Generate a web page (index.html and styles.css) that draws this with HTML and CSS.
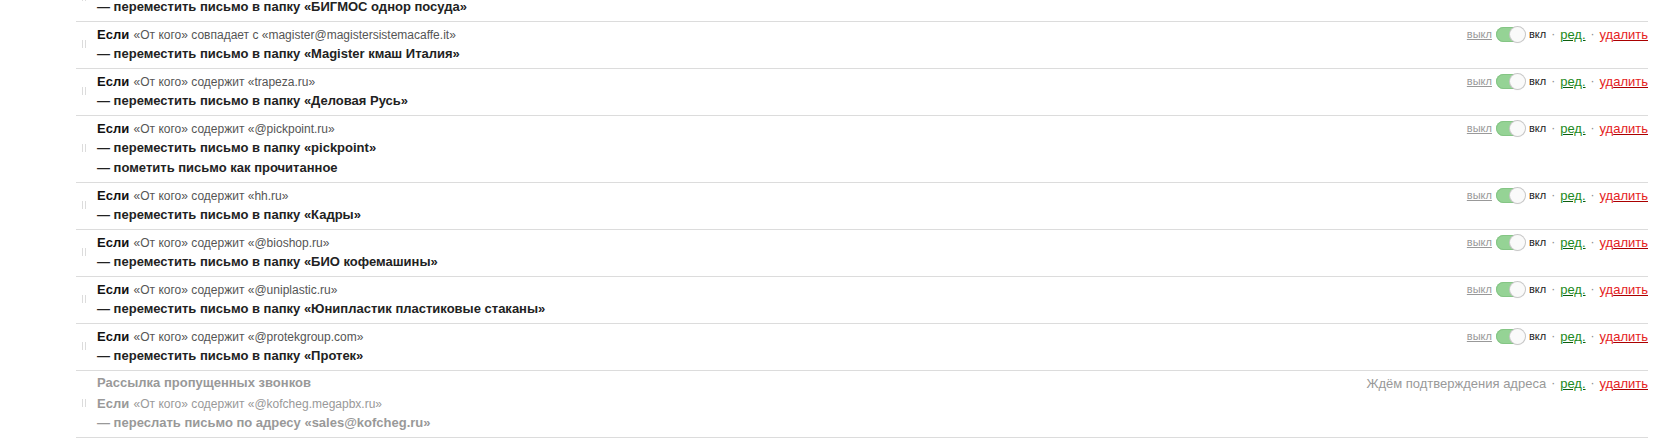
FILE: index.html
```html
<!DOCTYPE html>
<html lang="ru">
<head>
<meta charset="utf-8">
<link rel="stylesheet" href="styles.css">
</head>
<body>
<div class="list">
  <div class="rule">
    <div class="handle"></div>
    <div class="body">
      <div class="line"><b class="if">Если</b> <span class="cond">«От кого» содержит «bigmos.ru»</span></div>
      <div class="line act">— переместить письмо в папку «БИГМОС однор посуда»</div>
    </div>
    <div class="ctrl">
      <a class="off">выкл</a><span class="toggle"><span class="knob"></span></span><span class="on">вкл</span><span class="dot">·</span><a class="edit">ред.</a><span class="dot">·</span><a class="del">уд<u>алить</u></a>
    </div>
  </div>
  <div class="rule">
    <div class="handle"></div>
    <div class="body">
      <div class="line"><b class="if">Если</b> <span class="cond">«От кого» совпадает с «magister@magistersistemacaffe.it»</span></div>
      <div class="line act">— переместить письмо в папку «Magister кмаш Италия»</div>
    </div>
    <div class="ctrl">
      <a class="off">выкл</a><span class="toggle"><span class="knob"></span></span><span class="on">вкл</span><span class="dot">·</span><a class="edit">ред.</a><span class="dot">·</span><a class="del">уд<u>алить</u></a>
    </div>
  </div>
  <div class="rule">
    <div class="handle"></div>
    <div class="body">
      <div class="line"><b class="if">Если</b> <span class="cond">«От кого» содержит «trapeza.ru»</span></div>
      <div class="line act">— переместить письмо в папку «Деловая Русь»</div>
    </div>
    <div class="ctrl">
      <a class="off">выкл</a><span class="toggle"><span class="knob"></span></span><span class="on">вкл</span><span class="dot">·</span><a class="edit">ред.</a><span class="dot">·</span><a class="del">уд<u>алить</u></a>
    </div>
  </div>
  <div class="rule">
    <div class="handle"></div>
    <div class="body">
      <div class="line"><b class="if">Если</b> <span class="cond">«От кого» содержит «@pickpoint.ru»</span></div>
      <div class="line act">— переместить письмо в папку «pickpoint»</div>
      <div class="line act">— пометить письмо как прочитанное</div>
    </div>
    <div class="ctrl">
      <a class="off">выкл</a><span class="toggle"><span class="knob"></span></span><span class="on">вкл</span><span class="dot">·</span><a class="edit">ред.</a><span class="dot">·</span><a class="del">уд<u>алить</u></a>
    </div>
  </div>
  <div class="rule">
    <div class="handle"></div>
    <div class="body">
      <div class="line"><b class="if">Если</b> <span class="cond">«От кого» содержит «hh.ru»</span></div>
      <div class="line act">— переместить письмо в папку «Кадры»</div>
    </div>
    <div class="ctrl">
      <a class="off">выкл</a><span class="toggle"><span class="knob"></span></span><span class="on">вкл</span><span class="dot">·</span><a class="edit">ред.</a><span class="dot">·</span><a class="del">уд<u>алить</u></a>
    </div>
  </div>
  <div class="rule">
    <div class="handle"></div>
    <div class="body">
      <div class="line"><b class="if">Если</b> <span class="cond">«От кого» содержит «@bioshop.ru»</span></div>
      <div class="line act">— переместить письмо в папку «БИО кофемашины»</div>
    </div>
    <div class="ctrl">
      <a class="off">выкл</a><span class="toggle"><span class="knob"></span></span><span class="on">вкл</span><span class="dot">·</span><a class="edit">ред.</a><span class="dot">·</span><a class="del">уд<u>алить</u></a>
    </div>
  </div>
  <div class="rule">
    <div class="handle"></div>
    <div class="body">
      <div class="line"><b class="if">Если</b> <span class="cond">«От кого» содержит «@uniplastic.ru»</span></div>
      <div class="line act">— переместить письмо в папку «Юнипластик пластиковые стаканы»</div>
    </div>
    <div class="ctrl">
      <a class="off">выкл</a><span class="toggle"><span class="knob"></span></span><span class="on">вкл</span><span class="dot">·</span><a class="edit">ред.</a><span class="dot">·</span><a class="del">уд<u>алить</u></a>
    </div>
  </div>
  <div class="rule">
    <div class="handle"></div>
    <div class="body">
      <div class="line"><b class="if">Если</b> <span class="cond">«От кого» содержит «@protekgroup.com»</span></div>
      <div class="line act">— переместить письмо в папку «Протек»</div>
    </div>
    <div class="ctrl">
      <a class="off">выкл</a><span class="toggle"><span class="knob"></span></span><span class="on">вкл</span><span class="dot">·</span><a class="edit">ред.</a><span class="dot">·</span><a class="del">уд<u>алить</u></a>
    </div>
  </div>
  <div class="rule pending">
    <div class="handle"></div>
    <div class="body">
      <div class="line title">Рассылка пропущенных звонков</div>
      <div class="line"><b class="if">Если</b> <span class="cond">«От кого» содержит «@kofcheg.megapbx.ru»</span></div>
      <div class="line act">— переслать письмо по адресу «sales@kofcheg.ru»</div>
    </div>
    <div class="ctrl">
      <span class="wait">Ждём подтверждения адреса</span><span class="dot">·</span><a class="edit">ред.</a><span class="dot">·</span><a class="del">уд<u>алить</u></a>
    </div>
  </div>
</div>
</body>
</html>
```

FILE: styles.css
```css
html, body {
  margin: 0;
  padding: 0;
  background: #fff;
  font-family: "Liberation Sans", Arial, sans-serif;
  color: #000;
}

.list {
  margin: -25px 0 0 76px;
  width: 1572px;
}

.rule {
  display: flex;
  align-items: flex-start;
  padding: 2px 0 4px 0;
  border-bottom: 1px solid #dcdcdc;
}

.handle {
  align-self: center;
  flex: none;
  width: 6px;
  height: 8px;
  margin: 0 10px 0 5px;
  background-image:
    radial-gradient(circle, #d8d8d8 0.6px, transparent 0.7px);
  background-size: 3px 2px;
  background-position: 0 0;
  opacity: 0.9;
}

.body {
  flex: 1;
}

.line {
  height: 20px;
  line-height: 20px;
  white-space: nowrap;
}

.if {
  font-size: 13px;
  font-weight: bold;
  color: #111;
}

.cond {
  font-size: 12px;
  color: #555;
}

.act {
  font-size: 13px;
  font-weight: bold;
  color: #222;
}

.ctrl {
  flex: none;
  display: flex;
  align-items: center;
  height: 20px;
  white-space: nowrap;
}

.off {
  font-size: 11px;
  color: #999;
  text-decoration: underline;
}

.toggle {
  position: relative;
  display: inline-block;
  width: 29px;
  height: 15px;
  margin: 0 4px 0 4px;
  border-radius: 8px;
  background: #95d395;
  box-shadow: inset 0 0 0 1px #85c585;
}

.knob {
  position: absolute;
  right: 0;
  top: 0;
  width: 15px;
  height: 15px;
  border-radius: 50%;
  background: #fafafa;
  box-shadow: 0 0 0 1px #c8c8c8, 0 1px 1px rgba(0,0,0,0.15);
}

.on {
  font-size: 11px;
  color: #222;
}

.dot {
  font-size: 12px;
  color: #888;
  margin: 0 5px;
}

.edit {
  font-size: 13px;
  color: #1d8a1d;
  text-decoration: underline;
  text-decoration-color: #0d5d0d;
}

.del {
  font-size: 13px;
  color: #e51d1d;
}

.del u {
  text-decoration-color: #a00;
}

.wait {
  font-size: 13px;
  color: #999;
}

.pending .title {
  font-size: 13px;
  font-weight: bold;
  color: #999;
}

.pending .if,
.pending .cond,
.pending .act {
  color: #999;
}
```
